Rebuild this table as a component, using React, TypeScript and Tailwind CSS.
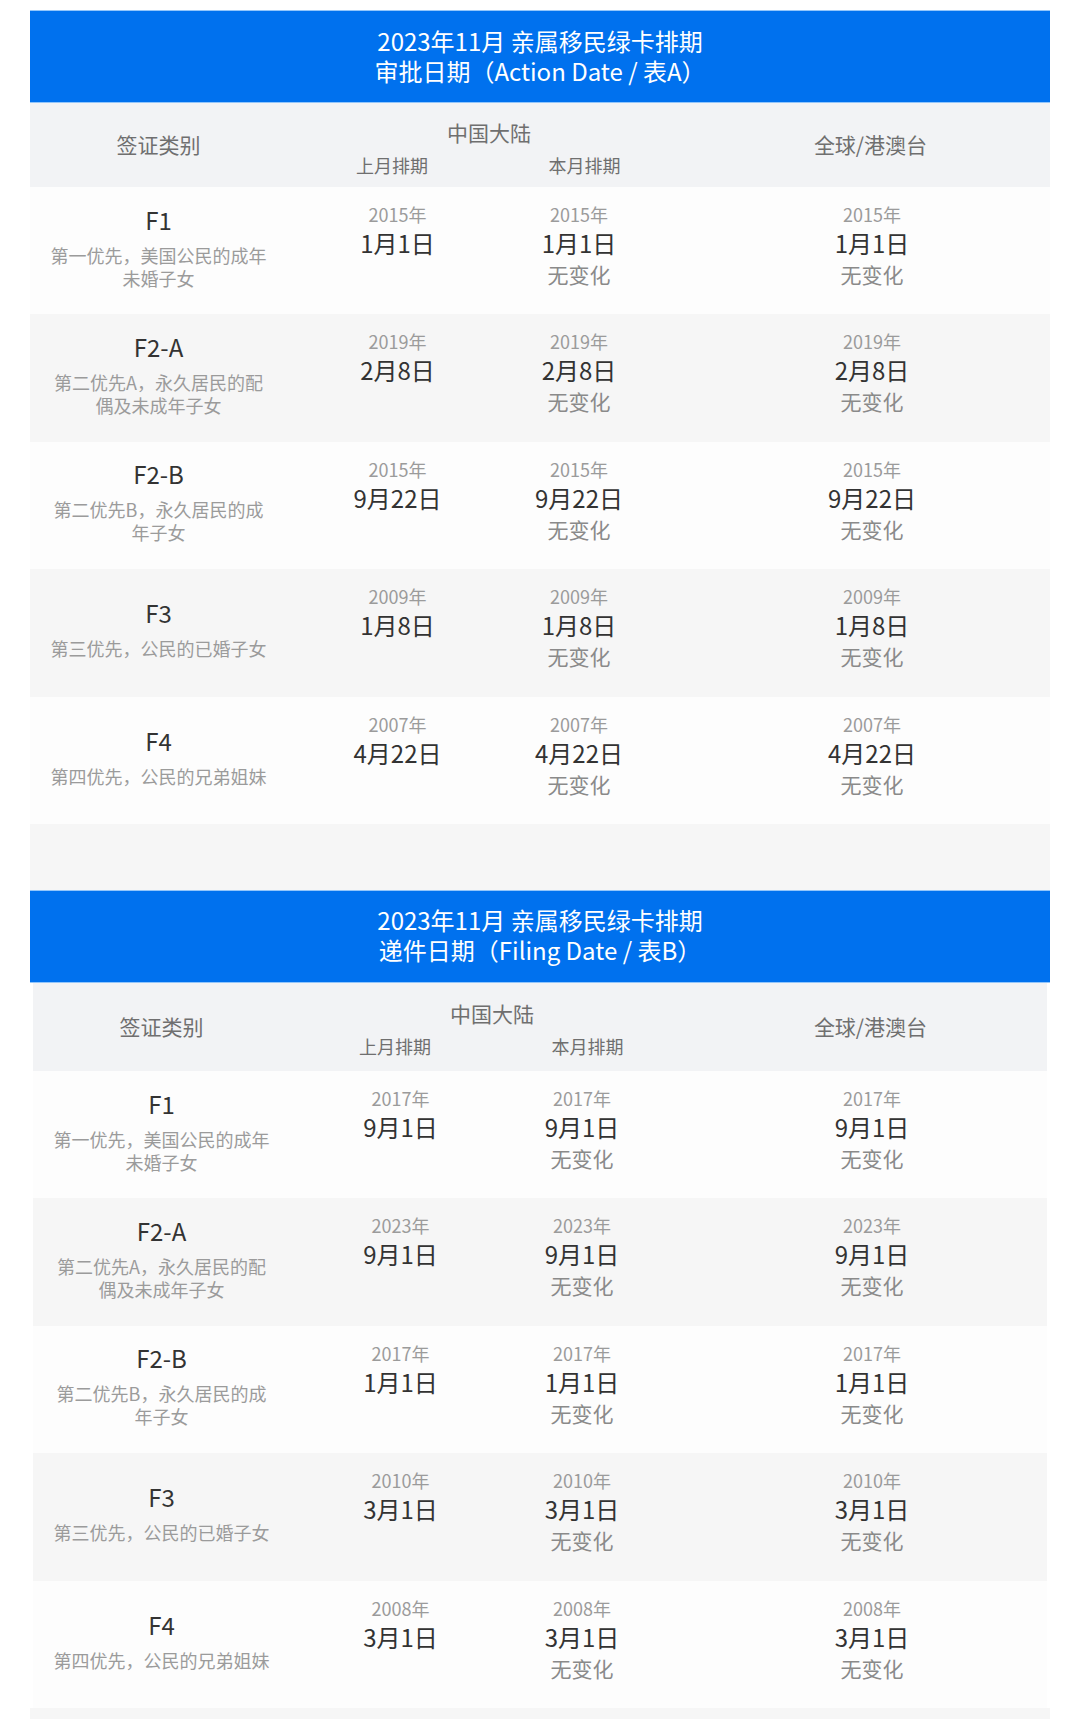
import React from "react"

type Cell = { year: string; date: string; note?: string }
type Row = { code: string; desc: string[]; last: Cell; current: Cell; global: Cell }

const same = (year: string, date: string) => ({
  last: { year, date },
  current: { year, date, note: "无变化" },
  global: { year, date, note: "无变化" },
})

const rowsA: Row[] = [
  { code: "F1", desc: ["第一优先，美国公民的成年", "未婚子女"], ...same("2015年", "1月1日") },
  { code: "F2-A", desc: ["第二优先A，永久居民的配", "偶及未成年子女"], ...same("2019年", "2月8日") },
  { code: "F2-B", desc: ["第二优先B，永久居民的成", "年子女"], ...same("2015年", "9月22日") },
  { code: "F3", desc: ["第三优先，公民的已婚子女"], ...same("2009年", "1月8日") },
  { code: "F4", desc: ["第四优先，公民的兄弟姐妹"], ...same("2007年", "4月22日") },
]

const rowsB: Row[] = [
  { code: "F1", desc: ["第一优先，美国公民的成年", "未婚子女"], ...same("2017年", "9月1日") },
  { code: "F2-A", desc: ["第二优先A，永久居民的配", "偶及未成年子女"], ...same("2023年", "9月1日") },
  { code: "F2-B", desc: ["第二优先B，永久居民的成", "年子女"], ...same("2017年", "1月1日") },
  { code: "F3", desc: ["第三优先，公民的已婚子女"], ...same("2010年", "3月1日") },
  { code: "F4", desc: ["第四优先，公民的兄弟姐妹"], ...same("2008年", "3月1日") },
]

const DateCell = ({ cell, className = "" }: { cell: Cell; className?: string }) => (
  <div className={`flex flex-col items-center pt-[15px] ${className}`}>
    <div className="text-[18px] leading-[24px] text-[#9b9b9b]">{cell.year}</div>
    <div className="text-[24px] leading-[33px] text-[#333333]">{cell.date}</div>
    {cell.note && <div className="text-[21px] leading-[30px] text-[#8a8a8a]">{cell.note}</div>}
  </div>
)

const VisaTable = ({
  subtitle,
  rows,
  headerHeight,
  inset,
}: {
  subtitle: string
  rows: Row[]
  headerHeight: string
  inset: string
}) => (
  <div>
    <div className="flex h-[93px] flex-col items-center justify-center border-y border-[#93c6fb] bg-[#0071ee] pb-[2px] text-[24px] leading-[30px] font-normal text-white">
      <div>2023年11月 亲属移民绿卡排期</div>
      <div>{subtitle}</div>
    </div>

    <div className={inset}>
      <div className={`flex bg-[#f2f3f5] ${headerHeight}`}>
        <div className="flex w-[257px] items-center justify-center text-[21px] text-[#6f6f6f]">签证类别</div>
        <div className="flex w-[404px] flex-col items-center justify-center pt-[6px]">
          <div className="text-[21px] leading-[30px] text-[#6f6f6f]">中国大陆</div>
          <div className="mt-[3px] grid w-full grid-cols-[210px_175px] text-[18px] leading-[30px] text-[#6f6f6f]">
            <div className="text-center">上月排期</div>
            <div className="text-center">本月排期</div>
          </div>
        </div>
        <div className="flex flex-1 items-center justify-center text-[21px] text-[#6f6f6f]">全球/港澳台</div>
      </div>

      {rows.map((row, i) => (
        <div
          key={row.code}
          className={`grid h-[127.4px] grid-cols-[257px_221px_142px_1fr] ${i % 2 === 0 ? "bg-[#fdfdfd]" : "bg-[#f6f6f6]"}`}
        >
          <div className="flex flex-col items-center justify-center pb-[9px]">
            <div className="text-[24px] leading-[34px] text-[#333333]">{row.code}</div>
            <div className="mt-[7px] text-center text-[18px] leading-[23px] text-[#9b9b9b]">
              {row.desc.map((line) => (
                <div key={line}>{line}</div>
              ))}
            </div>
          </div>
          <DateCell cell={row.last} />
          <DateCell cell={row.current} />
          <DateCell cell={row.global} className="pl-[44px]" />
        </div>
      ))}
    </div>
  </div>
)

export default function App() {
  return (
    <div className="min-h-[1719px] bg-white pt-[10px] font-['Noto_Sans_CJK_SC','Noto_Sans',sans-serif]">
      <div className="ml-[30px] w-[1020px]">
        <VisaTable
          subtitle="审批日期（Action Date / 表A）"
          rows={rowsA}
          headerHeight="h-[84px]"
          inset=""
        />
        <div className="h-[66px] bg-[#f6f6f6]" />
        <VisaTable
          subtitle="递件日期（Filing Date / 表B）"
          rows={rowsB}
          headerHeight="h-[88px]"
          inset="mx-[3px]"
        />
        <div className="h-[20px] bg-[#f6f6f6]" />
      </div>
    </div>
  )
}
